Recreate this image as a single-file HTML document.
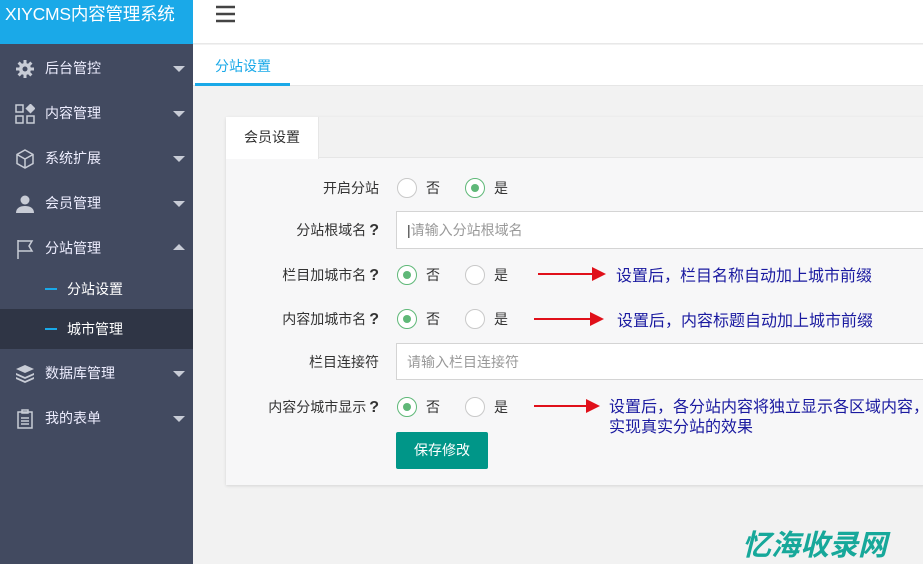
<!DOCTYPE html>
<html><head><meta charset="utf-8"><style>
*{margin:0;padding:0;box-sizing:border-box}
body{width:923px;height:564px;overflow:hidden;position:relative;background:#f2f2f2;font-family:"Liberation Sans","Noto Sans CJK SC",sans-serif;font-size:14px;color:#333}
.a{position:absolute}
#side{left:0;top:0;width:193px;height:564px;background:#424a60}
#logo{left:0;top:0;width:193px;height:44px;background:#1aa9e8;color:#fff;font-size:17.5px;line-height:28px;padding-left:5px;white-space:nowrap;letter-spacing:-0.2px}
.mi{position:absolute;left:0;width:193px;height:45px;color:#eef;font-size:14px;line-height:45px;padding-left:45px}
.mi .ic{position:absolute;left:15px;top:13px;width:20px;height:20px}
.mi .car{position:absolute;right:8px;top:20px;width:0;height:0;border-left:6px solid transparent;border-right:6px solid transparent;border-top:6px solid #c8ccd6}
.mi .up{border-top:none;border-bottom:6px solid #c8ccd6;top:18px}
.sub{position:absolute;left:0;width:193px;height:40px;line-height:40px;color:#fff;padding-left:67px}
.sub:before{content:"";position:absolute;left:45px;top:19px;width:12px;height:2px;background:#1aa9e8}
.lbl{position:absolute;right:544px;text-align:right;white-space:nowrap;font-size:14px;color:#333}
.q{font-weight:bold;font-size:16px;margin-left:3px}
.rd{position:absolute;width:20px;height:20px;border:1.5px solid #c9c9c9;border-radius:50%;background:#fff}
.rd.on{border-color:#5fb878}
.rd.on:after{content:"";position:absolute;left:4.5px;top:4.5px;width:8px;height:8px;border-radius:50%;background:#5fb878}
.rt{position:absolute;font-size:14px}
.inp{position:absolute;left:396px;width:540px;height:38px;background:#fff;border:1px solid #d4d4d4;color:#999;padding-left:10px;line-height:36px;font-size:14px}
.note{position:absolute;color:#1a1aa0;font-size:16px;font-family:"WenQuanYi Zen Hei","Noto Sans CJK SC",sans-serif;line-height:20px}
</style></head><body>
<div class="a" id="side">
<div class="a" id="logo">XIYCMS内容管理系统</div>
<div class="mi" style="top:46px"><svg class="ic" viewBox="0 0 20 20"><circle cx="10" cy="10" r="6" fill="#c8ccd6"/><g stroke="#c8ccd6" stroke-width="3"><path d="M10 1v18M1 10h18M3.6 3.6l12.8 12.8M16.4 3.6L3.6 16.4"/></g><circle cx="10" cy="10" r="2.5" fill="#424a60"/></svg>后台管控<span class="car"></span></div>
<div class="mi" style="top:91px"><svg class="ic" viewBox="0 0 20 20" fill="none" stroke="#c8ccd6" stroke-width="1.5"><rect x="1" y="1" width="7" height="7"/><rect x="1" y="12" width="7" height="7"/><rect x="12" y="12" width="7" height="7"/><path d="M15.5 0.5l4 4-4 4-4-4z" fill="#c8ccd6"/></svg>内容管理<span class="car"></span></div>
<div class="mi" style="top:136px"><svg class="ic" viewBox="0 0 20 20" fill="none" stroke="#c8ccd6" stroke-width="1.5"><path d="M10 1l8 4.5v9L10 19l-8-4.5v-9z M2 5.5l8 4.5 8-4.5 M10 10v9"/></svg>系统扩展<span class="car"></span></div>
<div class="mi" style="top:181px"><svg class="ic" viewBox="0 0 20 20" fill="#c8ccd6"><circle cx="10" cy="6" r="4.5"/><path d="M1 19c0-5 4-7 9-7s9 2 9 7z"/></svg>会员管理<span class="car"></span></div>
<div class="mi" style="top:226px"><svg class="ic" viewBox="0 0 20 20" fill="none" stroke="#c8ccd6" stroke-width="1.5"><path d="M3 1v19 M3 2h14l-3 5 3 5H3"/></svg>分站管理<span class="car up"></span></div>
<div class="sub" style="top:269px">分站设置</div>
<div class="sub" style="top:309px;background:#2f3545">城市管理</div>
<div class="mi" style="top:351px"><svg class="ic" viewBox="0 0 20 20" fill="#c8ccd6"><path d="M10 1l9 4-9 4-9-4z"/><path d="M1 9l9 4 9-4v2l-9 4-9-4z"/><path d="M1 13l9 4 9-4v2l-9 4-9-4z"/></svg>数据库管理<span class="car"></span></div>
<div class="mi" style="top:396px"><svg class="ic" viewBox="0 0 20 20" fill="none" stroke="#c8ccd6" stroke-width="1.5"><rect x="3" y="3" width="14" height="16"/><rect x="7" y="1" width="6" height="3"/><path d="M6 9h8M6 12h8M6 15h8"/></svg>我的表单<span class="car"></span></div>
</div>
<div class="a" style="left:193px;top:0;width:730px;height:44px;background:#fff;border-bottom:1px solid #e8e8e8"></div>
<svg class="a" style="left:216px;top:4px" width="20" height="20"><path d="M0 3h19M0 10h19M0 17h19" stroke="#444" stroke-width="2.5"/></svg>
<div class="a" style="left:193px;top:45px;width:730px;height:41px;background:#fff;border-bottom:1px solid #e6e6e6"></div>
<div class="a" style="left:215px;top:56px;color:#1aa9e8;font-size:14px">分站设置</div>
<div class="a" style="left:195px;top:83px;width:95px;height:3px;background:#1aa9e8"></div>
<div class="a" style="left:226px;top:117px;width:700px;height:368px;background:#f7f7f8;box-shadow:0 1px 3px rgba(0,0,0,.12)"></div>
<div class="a" style="left:226px;top:117px;width:700px;height:41px;background:#f2f2f2;border-bottom:1px solid #e6e6e6"></div>
<div class="a" style="left:226px;top:117px;width:93px;height:42px;background:#fff;border-right:1px solid #e6e6e6;text-align:center;line-height:40px">会员设置</div>

<div class="lbl" style="top:178px">开启分站</div>
<div class="rd" style="left:397px;top:178px"></div><div class="rt" style="left:426px;top:178px">否</div>
<div class="rd on" style="left:465px;top:178px"></div><div class="rt" style="left:494px;top:178px">是</div>

<div class="lbl" style="top:220px">分站根域名<span class="q">?</span></div>
<div class="inp" style="top:211px"><span style="color:#333">|</span>请输入分站根域名</div>

<div class="lbl" style="top:265px">栏目加城市名<span class="q">?</span></div>
<div class="rd on" style="left:397px;top:265px"></div><div class="rt" style="left:426px;top:265px">否</div>
<div class="rd" style="left:465px;top:265px"></div><div class="rt" style="left:494px;top:265px">是</div>
<svg class="a" style="left:536px;top:264px" width="72" height="20"><path d="M2 10h56" stroke="#e0101a" stroke-width="2"/><path d="M56 3l14 7-14 7z" fill="#e0101a"/></svg>
<div class="note" style="left:616px;top:264px">设置后，栏目名称自动加上城市前缀</div>

<div class="lbl" style="top:309px">内容加城市名<span class="q">?</span></div>
<div class="rd on" style="left:397px;top:309px"></div><div class="rt" style="left:426px;top:309px">否</div>
<div class="rd" style="left:465px;top:309px"></div><div class="rt" style="left:494px;top:309px">是</div>
<svg class="a" style="left:532px;top:309px" width="72" height="20"><path d="M2 10h58" stroke="#e0101a" stroke-width="2"/><path d="M58 3l14 7-14 7z" fill="#e0101a"/></svg>
<div class="note" style="left:617px;top:309px">设置后，内容标题自动加上城市前缀</div>

<div class="lbl" style="top:352px">栏目连接符</div>
<div class="inp" style="top:343px;height:37px">请输入栏目连接符</div>

<div class="lbl" style="top:397px">内容分城市显示<span class="q">?</span></div>
<div class="rd on" style="left:397px;top:397px"></div><div class="rt" style="left:426px;top:397px">否</div>
<div class="rd" style="left:465px;top:397px"></div><div class="rt" style="left:494px;top:397px">是</div>
<svg class="a" style="left:530px;top:396px" width="72" height="20"><path d="M4 10h54" stroke="#e0101a" stroke-width="2"/><path d="M56 3l14 7-14 7z" fill="#e0101a"/></svg>
<div class="note" style="left:609px;top:395px;white-space:nowrap">设置后，各分站内容将独立显示各区域内容，<br>实现真实分站的效果</div>

<div class="a" style="left:396px;top:432px;width:92px;height:37px;background:#009688;color:#fff;border-radius:2px;text-align:center;line-height:37px">保存修改</div>
<div class="a" style="left:742px;top:522px;font-size:29px;font-weight:bold;font-style:italic;color:#17a89a;letter-spacing:0px;font-family:'Noto Sans CJK SC',sans-serif">忆海收录网</div>
</body></html>
